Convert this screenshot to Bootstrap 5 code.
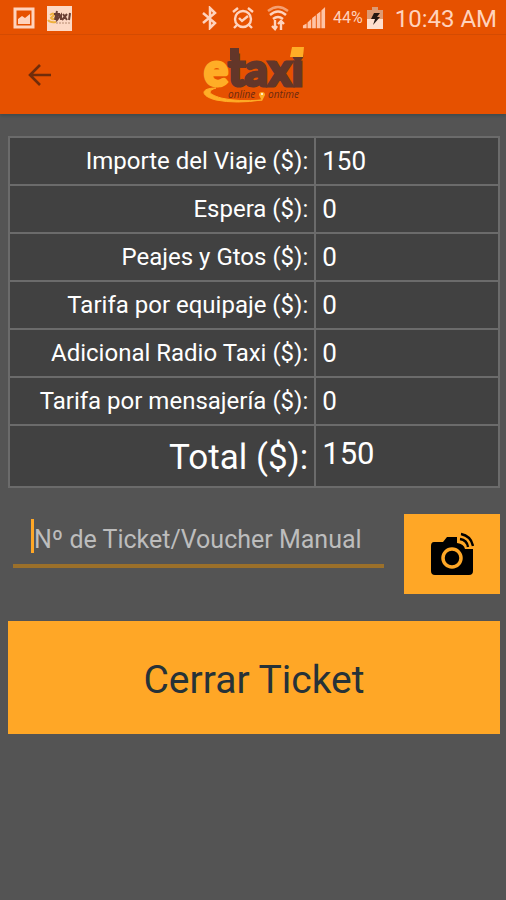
<!DOCTYPE html>
<html lang="es">
<head>
<meta charset="utf-8">
<meta name="viewport" content="width=device-width, initial-scale=1">
<title>eTaxi</title>
<link href="https://cdn.jsdelivr.net/npm/bootstrap@5.3.0/dist/css/bootstrap.min.css" rel="stylesheet">
<style>
body { background: #545454; font-family: Roboto, "Liberation Sans", sans-serif; color: #fff; }
.top-area { background: #e65100; box-shadow: 0 2px 3px #3e4a4c; }
.status-bar { height: 35px; padding: 2px 9px 0 13px; color: #ffd3bd; border-bottom: 1px solid #d44b02; }
.status-bar svg { flex: none; }
.status-icons { gap: 13px; }
.battery-text { font-size: 16px; line-height: 20px; margin-left: 7px; }
.clock { font-size: 24px; line-height: 28px; margin: 2px 0 0 12px; white-space: nowrap; }
.app-bar { height: 79px; }
.back-btn { border: 0; background: none; padding: 16px; margin-left: 8px; line-height: 0; }
.screen { padding: 22px 6px 0 8px; }
.fares { border-collapse: collapse; background: #414141; margin: 0; width: 100%; table-layout: fixed; }
.fares th, .fares td { border: 2px solid #6b6b6b; height: 48px; padding: 0 6px; font-weight: 400; font-size: 24px; line-height: 32px; vertical-align: middle; }
.fares th { width: 62.5%; text-align: right; white-space: nowrap; }
.fares td { font-size: 26px; }
.fares .total-row th { font-size: 35px; height: 62px; padding-top: 4px; }
.fares .total-row td { font-size: 31px; padding-bottom: 4px; }
.ticket-row { margin-top: 26px; gap: 20px; }
.ticket-field { margin: 5px 0 0 5px; padding: 0 18px; height: 49px; border-bottom: 4px solid #9b702a; min-width: 0; }
.caret { width: 3px; height: 34px; background: #ffa726; flex: none; }
.ticket-field input { border: 0; background: none; outline: 0; padding: 4px 0 0; width: 100%; min-width: 0; color: #fff; font-size: 25px; line-height: 34px; }
.ticket-field input::placeholder { color: #bdbdbd; opacity: 1; }
.amber-btn { background: #ffa726; border: 0; border-radius: 0; color: #263238; }
.camera-btn { width: 96px; height: 80px; flex: none; }
.close-btn { margin-top: 27px; padding-top: 5px; height: 113px; font-size: 39px; line-height: 48px; }
.logo { overflow: visible; }
.logo-big { font: 900 45px Lato, sans-serif; }
.logo-small { font: italic 400 10px "Open Sans", sans-serif; }
</style>
</head>
<body>
<header class="top-area">
  <div class="status-bar d-flex align-items-center justify-content-between">
    <div class="d-flex align-items-center gap-2">
      <svg width="22" height="22" viewBox="0 0 22 22" aria-hidden="true"><path d="M2 2h18v18H2z" fill="none" stroke="#ffd3bd" stroke-width="3"/><path d="M5 17v-5l4-3 3 2 5-4v10z" fill="#ffd3bd"/></svg>
      <svg class="ms-1" width="25" height="25" viewBox="0 0 25 25" aria-hidden="true"><path d="M0 0h25v25H0z" fill="#fdd9c5"/><path d="M3 9q4-3 4 0L4 12q2 3 5-1M1 14q2 3 8 2" fill="none" stroke="#efb13f" stroke-width="2"/><path d="M10 5L8 14M7 8h6M13 9q-4 0-3 5l4-5v5M16 8l4 6M20 8l-5 6M23 7l-1 7" fill="none" stroke="#6b4035" stroke-width="2"/><path d="M9 17h14" stroke="#b58b72" stroke-dasharray="2 1"/></svg>
    </div>
    <div class="d-flex align-items-center">
      <div class="status-icons d-flex align-items-center">
        <svg width="18" height="24" viewBox="0 0 18 24" aria-hidden="true"><path d="M2 7l12 10-5 5V2l5 5L2 17" fill="none" stroke="#ffd3bd" stroke-width="2.5"/></svg>
        <svg width="22" height="24" viewBox="0 0 22 24" aria-hidden="true"><g fill="none" stroke="#ffd3bd" stroke-width="2.4"><circle cx="11" cy="13" r="8"/><path d="M7 12l3 3 6-5M1 6l5-4M16 2l5 4M5 19l-3 3M17 19l3 3"/></g></svg>
        <svg width="22" height="26" viewBox="0 0 22 26" aria-hidden="true"><g fill="none" stroke="#ffd3bd" stroke-width="2.4"><path d="M1 6q10-8 20 0" opacity=".6"/><path d="M3 10q8-7 16 0M6 14q5-4 10 0"/><path d="M8 15v9M5 21l3 3 2-3M14 25v-9M11 19l3-3 3 3"/></g></svg>
        <svg width="24" height="26" viewBox="0 0 26 26" aria-hidden="true"><path d="M1 24v-3l4-2v5zM6 24v-6l4-4v10zM11 24V13l4-3v14zM16 24V9l4-3v18zM21 24V5l4-4v23z" fill="#ffc3a5"/></svg>
      </div>
      <span class="battery-text">44%</span>
      <svg class="ms-1" width="16" height="24" viewBox="0 0 16 24" aria-hidden="true"><path d="M5 1h6v3h5v9H0V4h5z" fill="#dc9b75"/><path d="M0 13h16v10H0z" fill="#ffe0d0"/><path d="M7 7h6l-3 4h3l-7 8 2-6H4z" fill="#241813"/></svg>
      <span class="clock">10:43 AM</span>
    </div>
  </div>
  <div class="app-bar row g-0 align-items-center">
    <div class="col">
      <button class="back-btn" type="button" aria-label="Volver"><svg width="32" height="32" viewBox="0 0 32 32"><path d="M27 16H6M16 6L6 16l10 10" fill="none" stroke="#702c0a" stroke-width="2.6"/></svg></button>
    </div>
    <div class="col-auto">
      <svg class="logo d-block" width="102" height="60" viewBox="0 0 102 60" role="img" aria-label="etaxi online ontime">
        <path d="M14 43C-2 43-2 51 14 55q20 4 46 0-24 2-41-2C6 49 5 46 14 43z" fill="#ffad26" stroke="#ffad26"/>
        <text class="logo-big" x="2" y="41" fill="#633629" stroke="#633629" stroke-width="3"><tspan fill="#ffad26" stroke="#ffad26">e</tspan>taxi</text>
        <path d="M28 3h9v12h-9z" fill="#633629"/>
        <path d="M90 2h12l-1 10H88z" fill="#ffad26"/>
        <g class="logo-small" fill="#6b2a12"><text x="26" y="53">online</text><text x="66" y="53">ontime</text></g>
        <path d="M60 56l-3-6a3 3 0 1 1 6 0z" fill="#ffad26"/><circle cx="60" cy="49" r="1" fill="#fff"/>
      </svg>
    </div>
    <div class="col"></div>
  </div>
</header>
<main class="screen">
  <table class="fares">
    <tbody>
      <tr><th scope="row">Importe del Viaje ($):</th><td>150</td></tr>
      <tr><th scope="row">Espera ($):</th><td>0</td></tr>
      <tr><th scope="row">Peajes y Gtos ($):</th><td>0</td></tr>
      <tr><th scope="row">Tarifa por equipaje ($):</th><td>0</td></tr>
      <tr><th scope="row">Adicional Radio Taxi ($):</th><td>0</td></tr>
      <tr><th scope="row">Tarifa por mensajería ($):</th><td>0</td></tr>
      <tr class="total-row"><th scope="row">Total ($):</th><td>150</td></tr>
    </tbody>
  </table>
  <form>
    <div class="ticket-row d-flex align-items-start">
      <div class="ticket-field d-flex flex-grow-1 align-items-start">
        <span class="caret"></span>
        <input type="text" id="ticket" placeholder="Nº de Ticket/Voucher Manual" aria-label="Nº de Ticket/Voucher Manual">
      </div>
      <button class="amber-btn camera-btn d-flex align-items-center justify-content-center" type="button" aria-label="Escanear ticket">
        <svg width="44" height="44" viewBox="0 0 44 44"><path d="M4 10h9l4-5h10v6q7 1 8 6h8v22q0 4-4 4H5q-4 0-4-4V14q0-4 3-4z" fill="#000"/><circle cx="22" cy="26" r="9" fill="#000" stroke="#ffa726" stroke-width="3.5"/><path d="M31 2q10 2 12 12M30 7q7 1 8 8" fill="none" stroke="#000" stroke-width="2.4"/></svg>
      </button>
    </div>
    <button class="amber-btn close-btn w-100" type="button">Cerrar Ticket</button>
  </form>
</main>
<script src="https://cdn.jsdelivr.net/npm/bootstrap@5.3.0/dist/js/bootstrap.bundle.min.js"></script>
</body>
</html>
